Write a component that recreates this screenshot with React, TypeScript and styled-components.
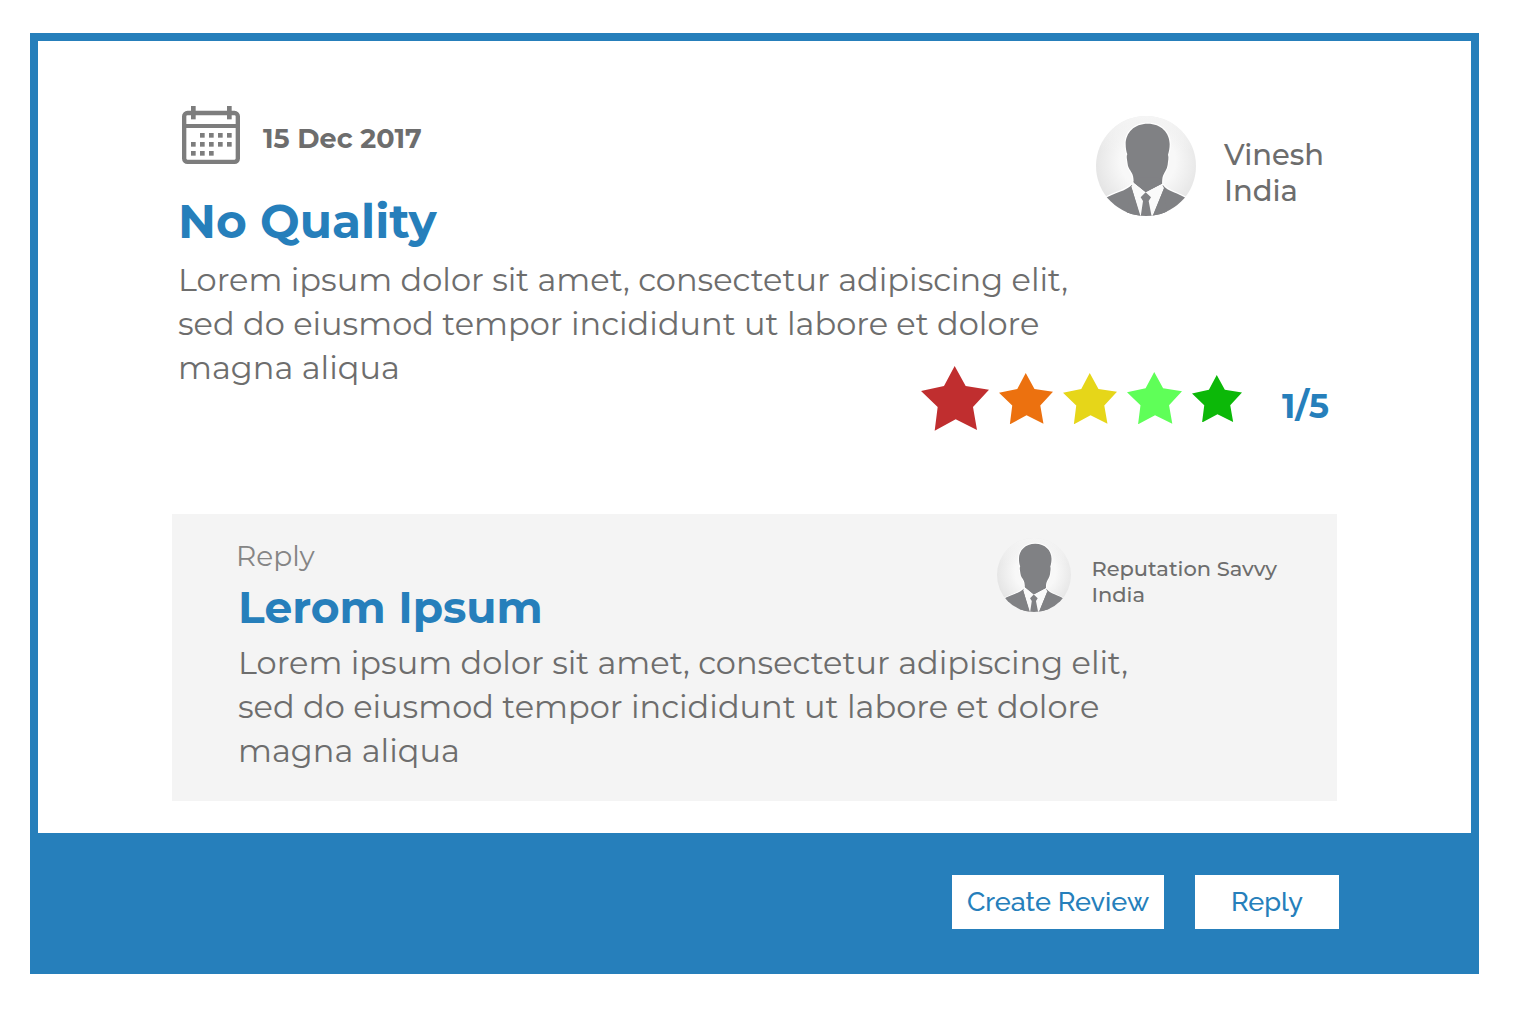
import React from "react";
import styled, { createGlobalStyle } from "styled-components";

const blue = "#267fbb";
const grey = "#6d6d6d";

const GlobalStyle = createGlobalStyle`
  *, *::before, *::after { box-sizing: border-box; }
  body {
    margin: 0;
    background: #fff;
    color: ${grey};
    font-family: Montserrat, Inter, "Open Sans", sans-serif;
  }
  h2, p { margin: 0; }
`;

const Page = styled.main`
  padding: 33px 35px 42px 30px;
`;

const Card = styled.section`
  border: 8px solid ${blue};
`;

const Content = styled.div`
  padding: 65px 134px 32px;
`;

const Review = styled.article`
  display: grid;
  grid-template-columns: minmax(0, 900px) 1fr;
  column-gap: 20px;
  padding-left: 4px;
`;

const DateRow = styled.div`
  display: flex;
  align-items: center;
  gap: 23px;
  padding-left: 6px;
`;

const DateText = styled.time`
  font-size: 27px;
  line-height: 36px;
  font-weight: 700;
  padding-top: 8px;
`;

const Title = styled.h2`
  padding-left: 2px;
  color: ${blue};
  line-height: 60px;
  font-weight: 700;
`;

const ReviewTitle = styled(Title)`
  margin: 28px 0 6px;
  font-size: 47px;
`;

const ReplyTitle = styled(Title)`
  margin: 3px 0 4px;
  font-size: 44px;
`;

const Text = styled.p`
  max-width: 900px;
  padding-left: 2px;
  font-size: 32px;
  line-height: 44px;
`;

const Author = styled.div<{ $small?: boolean }>`
  display: flex;
  align-items: center;
  align-self: start;
  gap: ${(p) => (p.$small ? 20 : 28)}px;
  margin-top: ${(p) => (p.$small ? 0 : 10)}px;
  font-size: ${(p) => (p.$small ? 21 : 29)}px;
  line-height: ${(p) => (p.$small ? 26 : 36)}px;
  font-weight: 500;
  white-space: nowrap;
`;

const AuthorText = styled.div`
  padding-top: 14px;
`;

const AvatarSvg = styled.svg<{ $size: number }>`
  display: block;
  flex: none;
  width: ${(p) => p.$size}px;
  height: ${(p) => p.$size}px;
`;

const Rating = styled.div`
  display: flex;
  align-items: center;
  justify-content: flex-end;
  gap: 40px;
  margin-top: -24px;
  padding-right: 8px;
`;

const Stars = styled.div`
  display: flex;
  align-items: center;
  gap: 10px;
`;

const StarSvg = styled.svg<{ $width: number }>`
  display: block;
  width: ${(p) => p.$width}px;
`;

const Score = styled.span`
  color: ${blue};
  font-size: 34px;
  line-height: 40px;
  font-weight: 700;
  padding-top: 16px;
`;

const ReplyPanel = styled.article`
  display: grid;
  grid-template-columns: 1fr auto;
  margin-top: 83px;
  padding: 24px 60px 28px 64px;
  background: #f4f4f4;
`;

const ReplyLabel = styled.div`
  color: #858585;
  font-size: 28px;
  line-height: 36px;
`;

const ReplyText = styled(Text)`
  grid-column: 1 / -1;
`;

const Footer = styled.footer`
  display: flex;
  justify-content: flex-end;
  gap: 31px;
  padding: 42px 132px 37px;
  background: ${blue};
`;

const Button = styled.button<{ $width: number }>`
  width: ${(p) => p.$width}px;
  height: 54px;
  padding: 0;
  border: 0;
  background: #fff;
  color: ${blue};
  font-family: Raleway, Inter, sans-serif;
  font-size: 27px;
  line-height: 32px;
  font-weight: 500;
  cursor: pointer;
`;

const CalendarSvg = styled.svg`
  display: block;
  width: 58px;
  height: 58px;
`;

const days = [
  [120, 129], [147, 129], [174, 129], [201, 129],
  [93, 156], [120, 156], [147, 156], [174, 156], [201, 156],
  [93, 183], [120, 183], [147, 183],
];

function Calendar() {
  return (
    <CalendarSvg viewBox="66 48 174 174" fill="#7d7d7d" aria-hidden="true">
      <rect x="72.5" y="69" width="161" height="146.5" rx="10" fill="none" stroke="#7d7d7d" strokeWidth="13" />
      <rect x="72" y="102" width="162" height="12" />
      <rect x="93" y="48" width="14" height="40" />
      <rect x="201" y="48" width="14" height="40" />
      {days.map(([x, y]) => (
        <rect key={`${x}-${y}`} x={x} y={y} width="14" height="14" />
      ))}
    </CalendarSvg>
  );
}

function Avatar({ size, id }: { size: number; id: string }) {
  return (
    <AvatarSvg $size={size} viewBox="0 0 300 300" aria-hidden="true">
      <defs>
        <radialGradient id={`${id}-bg`} cx="52%" cy="45%" r="55%">
          <stop offset="0.5" stopColor="#f8f8f8" />
          <stop offset="1" stopColor="#e4e4e4" />
        </radialGradient>
        <linearGradient id={`${id}-top`} x1="0" y1="0" x2="0" y2="1">
          <stop offset="0" stopColor="#f5f5f5" />
          <stop offset="0.35" stopColor="#f5f5f5" stopOpacity="0" />
        </linearGradient>
        <clipPath id={`${id}-clip`}>
          <circle cx="150" cy="150" r="150" />
        </clipPath>
      </defs>
      <g clipPath={`url(#${id}-clip)`}>
        <rect width="300" height="300" fill={`url(#${id}-bg)`} />
        <rect width="300" height="300" fill={`url(#${id}-top)`} />
        <g stroke="#fff" strokeWidth="7" strokeLinejoin="round" paintOrder="stroke" fill="#808184">
          <path d="M20 250 C60 228 88 226 108 206 L151 232 L200 206 C216 228 244 228 285 254 L285 310 L20 310 Z" />
          <path d="M155 23 C115 23 89 50 89 84 C89 97 91 107 94 115 C90 121 94 134 95 144 C96 157 104 163 109 174 C113 183 112 193 114 201 L149 229 L198 204 C199 195 198 187 201 179 C206 167 213 160 215 146 C216 135 219 124 216 116 C219 107 221 96 221 84 C221 50 195 23 155 23 Z" />
        </g>
        <path d="M112 201 L149 229 L198 204 L204 217 L170 302 L132 302 L106 212 Z" fill="#fafafa" />
        <path d="M112 198 L149 229 L199 202 L190 184 L120 184 Z" fill="#808184" />
        <path d="M149 229 L165 244 L158 255 L167 302 L134 302 L141 255 L134 244 Z" fill="#808184" />
        <path d="M106 212 L134 302 L90 302 Z M204 217 L169 302 L215 302 Z" fill="#808184" />
      </g>
    </AvatarSvg>
  );
}

const stars = [
  { color: "#c02e2f", width: 68 },
  { color: "#ec710f", width: 54 },
  { color: "#e6d619", width: 54 },
  { color: "#5fff58", width: 55 },
  { color: "#0cb808", width: 50 },
];

function Star({ color, width }: { color: string; width: number }) {
  return (
    <StarSvg $width={width} viewBox="0 0 204 194" aria-hidden="true">
      <polygon
        fill={color}
        points="101,0 134,60 204,71 156,123 168,192 104,160 41,194 50,123 0,75 69,60"
      />
    </StarSvg>
  );
}

const lorem =
  "Lorem ipsum dolor sit amet, consectetur adipiscing elit, sed do eiusmod tempor incididunt ut labore et dolore magna aliqua";

export default function App() {
  return (
    <>
      <GlobalStyle />
      <Page>
        <Card>
          <Content>
            <Review>
              <div>
                <DateRow>
                  <Calendar />
                  <DateText dateTime="2017-12-15">15 Dec 2017</DateText>
                </DateRow>
                <ReviewTitle>No Quality</ReviewTitle>
                <Text>{lorem}</Text>
              </div>
              <Author>
                <Avatar size={100} id="reviewer" />
                <AuthorText>
                  <div>Vinesh</div>
                  <div>India</div>
                </AuthorText>
              </Author>
            </Review>
            <Rating>
              <Stars>
                {stars.map((star) => (
                  <Star key={star.color} {...star} />
                ))}
              </Stars>
              <Score>1/5</Score>
            </Rating>
            <ReplyPanel>
              <div>
                <ReplyLabel>Reply</ReplyLabel>
                <ReplyTitle>Lerom Ipsum</ReplyTitle>
              </div>
              <Author $small>
                <Avatar size={74} id="replier" />
                <AuthorText>
                  <div>Reputation Savvy</div>
                  <div>India</div>
                </AuthorText>
              </Author>
              <ReplyText>{lorem}</ReplyText>
            </ReplyPanel>
          </Content>
          <Footer>
            <Button type="button" $width={212}>Create Review</Button>
            <Button type="button" $width={144}>Reply</Button>
          </Footer>
        </Card>
      </Page>
    </>
  );
}
